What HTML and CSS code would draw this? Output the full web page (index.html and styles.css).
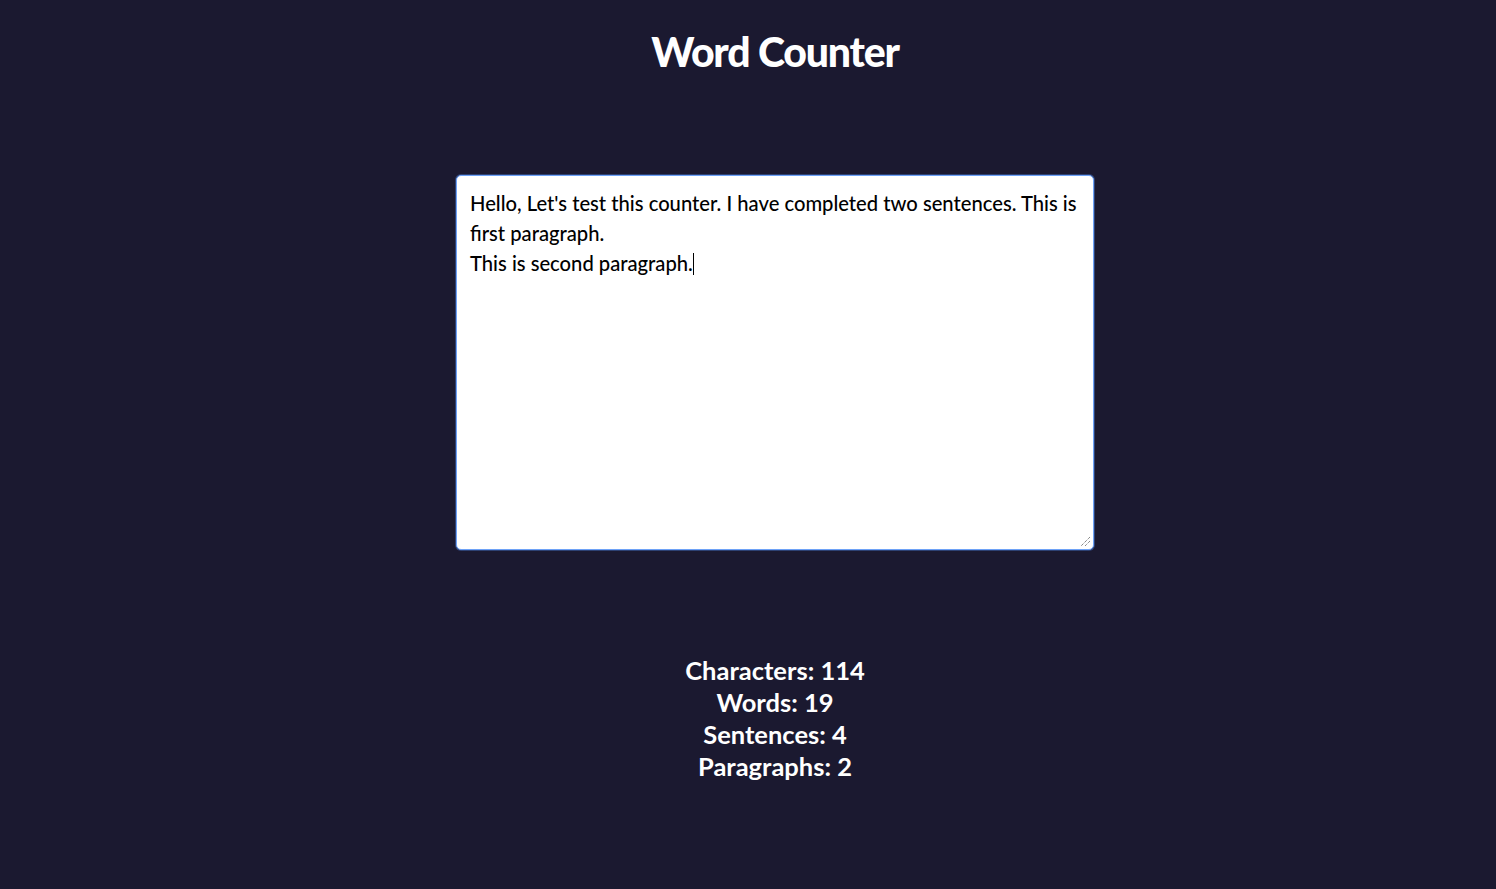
FILE: index.html
```html
<!DOCTYPE html>
<html lang="en">
<head>
<meta charset="utf-8">
<title>Word Counter</title>
<link rel="stylesheet" href="styles.css">
</head>
<body>
<main class="page">
  <h1 class="title">Word Counter</h1>
  <div class="editor">
    <div class="editor-text">Hello, Let's test this counter. I have completed two sentences. This is first paragraph.<br>This is second paragraph.<span class="caret"></span></div>
    <svg class="grip" width="12" height="12" viewBox="0 0 12 12"><path d="M11 2 L2 11 M11 6 L6 11" stroke="#555" stroke-width="1" stroke-dasharray="1 1" fill="none"/></svg>
  </div>
  <div class="stats">
    <p class="stat">Characters: 114</p>
    <p class="stat">Words: 19</p>
    <p class="stat">Sentences: 4</p>
    <p class="stat">Paragraphs: 2</p>
  </div>
</main>
</body>
</html>
```
FILE: styles.css
```css
html, body {
  margin: 0;
  padding: 0;
  background: #1b1930;
  height: 100%;
}
body {
  font-family: Lato, "Noto Sans", sans-serif;
  color: #ffffff;
}
.page {
  display: flex;
  flex-direction: column;
  align-items: center;
  padding-left: 54px;
  padding-top: 26px;
}
.title {
  margin: 0;
  font-size: 41px;
  font-weight: 900;
  letter-spacing: -1.2px;
  line-height: 52px;
}
.editor {
  position: relative;
  margin-top: 97px;
  width: 636px;
  height: 373px;
  background: #fff;
  border: 1px solid #6ea2f7;
  border-radius: 5px;
  box-shadow: 0 0 0 1px rgba(80, 140, 240, 0.35);
  box-sizing: content-box;
}
.editor-text {
  padding: 12px 13px;
  color: #000;
  font-size: 20.2px;
  line-height: 30px;
  font-weight: 500;
}
.caret {
  display: inline-block;
  width: 1px;
  height: 22px;
  background: #000;
  vertical-align: -4px;
}
.grip {
  position: absolute;
  right: 2px;
  bottom: 2px;
}
.stats {
  margin-top: 104px;
  display: flex;
  flex-direction: column;
  align-items: center;
}
.stat {
  margin: 0;
  font-size: 25.5px;
  line-height: 32px;
  font-weight: 700;
}
```
